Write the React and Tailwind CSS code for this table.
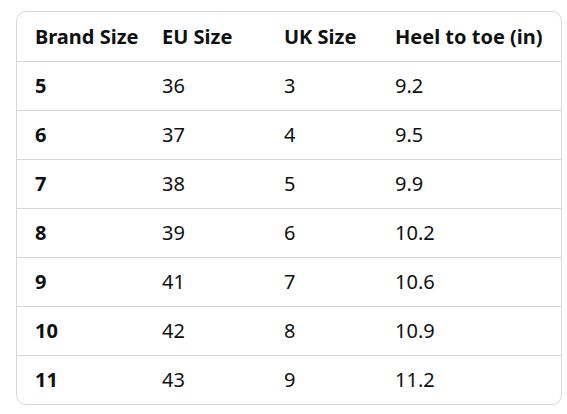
import React from "react";

const rows = [
  ["5", "36", "3", "9.2"],
  ["6", "37", "4", "9.5"],
  ["7", "38", "5", "9.9"],
  ["8", "39", "6", "10.2"],
  ["9", "41", "7", "10.6"],
  ["10", "42", "8", "10.9"],
  ["11", "43", "9", "11.2"],
];

const cols = "grid grid-cols-[127px_122px_111px_1fr]";

export default function App() {
  return (
    <div className="w-[567px] h-[414px] bg-white pt-[11px] pl-[16px] text-[#0f1111] [font-family:'Noto_Sans',sans-serif]">
      <div className="w-[546px] rounded-[10px] border border-[#d5d9d9] overflow-hidden">
        <div className={`${cols} h-[49px] items-center text-[20px] leading-none font-bold`}>
          <div className="pl-[18px]">Brand Size</div>
          <div className="pl-[18px]">EU Size</div>
          <div className="pl-[18px]">UK Size</div>
          <div className="pl-[18px]">Heel to toe (in)</div>
        </div>
        {rows.map((r, i) => (
          <div key={i} className={`${cols} h-[49px] items-center text-[20px] leading-none border-t border-[#d5d9d9]`}>
            <div className="pl-[18px] font-bold">{r[0]}</div>
            <div className="pl-[18px]">{r[1]}</div>
            <div className="pl-[18px]">{r[2]}</div>
            <div className="pl-[18px]">{r[3]}</div>
          </div>
        ))}
      </div>
    </div>
  );
}
